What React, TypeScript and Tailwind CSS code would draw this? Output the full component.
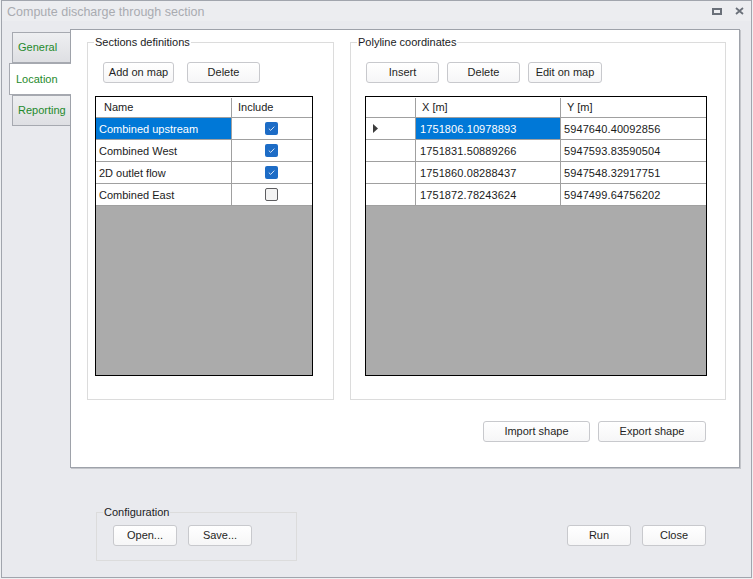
import React from 'react';

const font = { fontFamily: '"Liberation Sans", Arial, sans-serif' };

const Btn: React.FC<{ label: string; className?: string }> = ({ label, className = '' }) => (
    <button
        className={`h-[21px] shrink-0 rounded-[3px] border border-[#c8c9cd] bg-gradient-to-b from-white to-[#f6f6f7] text-[11px] leading-none text-[#1f1f24] ${className}`}
    >
        {label}
    </button>
);

const Group: React.FC<{ title: string; className?: string; legendBg?: string; children?: React.ReactNode }> = ({
    title,
    className = '',
    legendBg = 'bg-white',
    children,
}) => (
    <div className={`relative shrink-0 border border-[#dcdcdc] ${className}`}>
        <span className={`absolute left-[6px] top-[-8px] px-[1px] text-[11px] leading-[14px] text-[#1b1b24] ${legendBg}`}>
            {title}
        </span>
        {children}
    </div>
);

const Check: React.FC<{ on: boolean }> = ({ on }) =>
    on ? (
        <span className="flex h-[13px] w-[13px] items-center justify-center rounded-[2px] bg-[#1d6cc6]">
            <svg width="9" height="9" viewBox="0 0 9 9">
                <path d="M1.8 4.6 L3.7 6.4 L7.3 2.6" stroke="#d4e3f6" strokeWidth="1" fill="none" />
            </svg>
        </span>
    ) : (
        <span className="h-[13px] w-[13px] rounded-[2px] border border-[#5d5d60] bg-[#f3f3f3]" />
    );

const sections = [
    { name: 'Combined upstream', on: true },
    { name: 'Combined West', on: true },
    { name: '2D outlet flow', on: true },
    { name: 'Combined East', on: false },
];

const coords = [
    ['1751806.10978893', '5947640.40092856'],
    ['1751831.50889266', '5947593.83590504'],
    ['1751860.08288437', '5947548.32917751'],
    ['1751872.78243624', '5947499.64756202'],
];

const Tab: React.FC<{ label: string; active?: boolean }> = ({ label, active }) =>
    active ? (
        <div className="relative z-10 -mr-[1px] flex h-[32px] w-[62px] items-center border border-r-0 border-[#a6a9b0] bg-white pl-[6px] text-[11px] text-[#1f8a2c]">
            {label}
        </div>
    ) : (
        <div className="ml-[3px] flex h-[31px] items-center border border-r-0 border-[#a6a9b0] bg-gradient-to-b from-[#eeeff1] to-[#dedfe3] pl-[5px] text-[11px] text-[#1f8a2c]">
            {label}
        </div>
    );

export default function App() {
    return (
        <div className="h-[579px] w-[753px] bg-[#eef0f2] pl-[1px]" style={font}>
            <div className="flex h-[578px] w-[751px] flex-col border border-[#a1a5ad] bg-[#e9eaee]">
                {/* title bar */}
                <div className="flex h-[20px] shrink-0 items-center justify-between bg-[#ecedf0] pl-[5px] pr-[7px]">
                    <span className="pt-[2px] text-[12.5px] text-[#a9abb0]">Compute discharge through section</span>
                    <div className="flex items-center gap-[13px]">
                        <svg width="10" height="7" viewBox="0 0 10 7">
                            <rect x="1" y="1" width="8" height="5" fill="none" stroke="#6a7079" strokeWidth="2" />
                        </svg>
                        <svg width="9" height="8" viewBox="0 0 9 8">
                            <path d="M1 1 L8 7 M8 1 L1 7" stroke="#6a7079" strokeWidth="1.8" />
                        </svg>
                    </div>
                </div>

                {/* tabs + page */}
                <div className="mt-[8px] flex pl-[7px]">
                    <div className="flex w-[61px] shrink-0 flex-col pt-[3px]">
                        <Tab label="General" />
                        <Tab label="Location" active />
                        <Tab label="Reporting" />
                    </div>
                    <div className="flex h-[439px] w-[670px] shrink-0 flex-col border border-[#9ea2aa] bg-white pl-[16px] pt-[12px] shadow-[1px_1px_0_#c3c5ca]">
                        <div className="flex gap-[16px]">
                            <Group title="Sections definitions" className="h-[358px] w-[247px]">
                                <div className="ml-[15px] mt-[19px] flex gap-[13px]">
                                    <Btn label="Add on map" className="w-[71px]" />
                                    <Btn label="Delete" className="w-[73px]" />
                                </div>
                                <div className="ml-[7px] mt-[13px] flex h-[280px] w-[218px] flex-col border border-black bg-[#ababab]">
                                    <div className="flex h-[21px] shrink-0 border-b border-[#a0a0a0] bg-white pt-[1px] text-[11px] text-[#1b1b1b]">
                                        <div className="flex w-[136px] items-center border-r border-[#a0a0a0] pl-[8px]">Name</div>
                                        <div className="flex flex-1 items-center pl-[6px]">Include</div>
                                    </div>
                                    {sections.map((s, i) => (
                                        <div key={s.name} className="flex h-[22px] shrink-0 border-b border-[#a0a0a0] bg-white text-[11px]">
                                            <div
                                                className={`flex w-[136px] items-center border-r border-[#a0a0a0] pl-[3px] pt-[1px] ${
                                                    i === 0 ? 'bg-[#0078d7] text-white' : 'text-[#1b1b1b]'
                                                }`}
                                            >
                                                {s.name}
                                            </div>
                                            <div className="flex flex-1 items-center justify-center pr-[2px]">
                                                <Check on={s.on} />
                                            </div>
                                        </div>
                                    ))}
                                </div>
                            </Group>

                            <Group title="Polyline coordinates" className="h-[358px] w-[376px]">
                                <div className="ml-[15px] mt-[19px] flex gap-[8px]">
                                    <Btn label="Insert" className="w-[73px]" />
                                    <Btn label="Delete" className="w-[73px]" />
                                    <Btn label="Edit on map" className="w-[74px]" />
                                </div>
                                <div className="ml-[14px] mt-[13px] flex h-[280px] w-[342px] flex-col border border-black bg-[#ababab]">
                                    <div className="flex h-[21px] shrink-0 border-b border-[#a0a0a0] bg-white pt-[1px] text-[11px] text-[#1b1b1b]">
                                        <div className="w-[50px] border-r border-[#a0a0a0]" />
                                        <div className="flex w-[145px] items-center border-r border-[#a0a0a0] pl-[6px]">X [m]</div>
                                        <div className="flex flex-1 items-center pl-[6px]">Y [m]</div>
                                    </div>
                                    {coords.map((c, i) => (
                                        <div key={c[0]} className="flex h-[22px] shrink-0 border-b border-[#a0a0a0] bg-white text-[11px]">
                                            <div className="flex w-[50px] items-center border-r border-[#a0a0a0] pl-[7px]">
                                                {i === 0 && (
                                                    <svg width="5" height="9" viewBox="0 0 5 9">
                                                        <path d="M0 0 L5 4.5 L0 9 Z" fill="#3c3c3c" />
                                                    </svg>
                                                )}
                                            </div>
                                            <div
                                                className={`flex w-[145px] items-center border-r border-[#a0a0a0] pl-[4px] pt-[1px] tracking-[0.1px] ${
                                                    i === 0 ? 'bg-[#0078d7] text-white' : 'text-[#1b1b1b]'
                                                }`}
                                            >
                                                {c[0]}
                                            </div>
                                            <div className="flex flex-1 items-center pl-[3px] pt-[1px] tracking-[0.1px] text-[#1b1b1b]">{c[1]}</div>
                                        </div>
                                    ))}
                                </div>
                            </Group>
                        </div>

                        <div className="mt-[21px] flex justify-end gap-[8px] pr-[33px]">
                            <Btn label="Import shape" className="w-[107px]" />
                            <Btn label="Export shape" className="w-[108px]" />
                        </div>
                    </div>
                </div>

                {/* bottom bar */}
                <div className="mt-[44px] flex items-start">
                    <Group title="Configuration" legendBg="bg-[#e9eaee]" className="ml-[94px] h-[49px] w-[201px]">
                        <div className="ml-[16px] mt-[12px] flex gap-[11px]">
                            <Btn label="Open..." className="w-[64px]" />
                            <Btn label="Save..." className="w-[64px]" />
                        </div>
                    </Group>
                    <div className="ml-auto mr-[45px] mt-[13px] flex gap-[11px]">
                        <Btn label="Run" className="w-[64px]" />
                        <Btn label="Close" className="w-[64px]" />
                    </div>
                </div>
            </div>
        </div>
    );
}
